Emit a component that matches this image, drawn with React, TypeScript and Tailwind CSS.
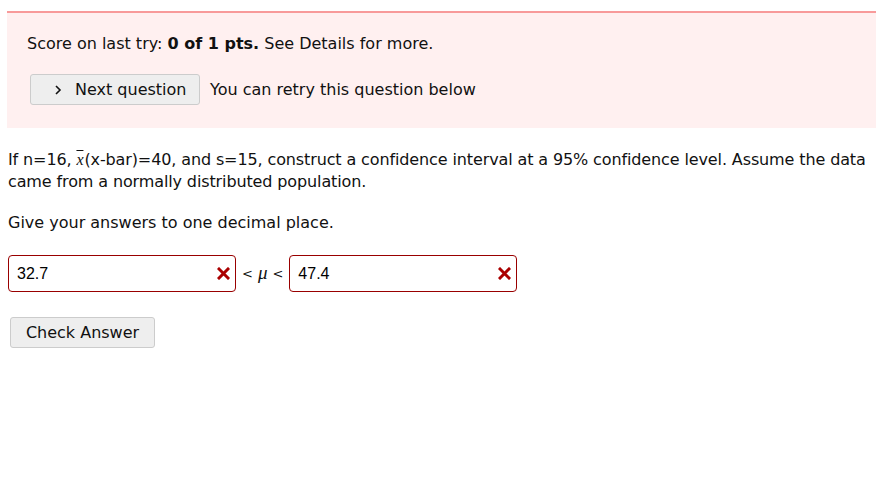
function XMark() {
  return (
    <svg width="13" height="13" viewBox="0 0 13 13" className="shrink-0">
      <path d="M2 2 L11 11 M11 2 L2 11" stroke="#aa0000" strokeWidth="3" strokeLinecap="square" />
    </svg>
  )
}

function AnswerBox({ value }: { value: string }) {
  return (
    <div className="flex items-center w-[228px] h-[37px] border border-[#990000] rounded-[4px] bg-white pl-[8px] pr-[5px]">
      <span className="flex-1 text-[16px] text-black" style={{ fontFamily: '"Liberation Sans", Arial, sans-serif' }}>
        {value}
      </span>
      <XMark />
    </div>
  )
}

export default function App() {
  return (
    <div className="w-[876px] h-[493px] bg-white text-[#111] text-[16px]" style={{ fontFamily: '"DejaVu Sans", Verdana, sans-serif' }}>
      <div className="pt-[11px] pl-[7px]">
        <div className="bg-[#fff0f0] border-t-2 border-[#f89a9a] pl-[20px] pt-[19px] pb-[23px]">
          <p className="leading-[24px]">
            Score on last try: <b>0 of 1 pts.</b> See Details for more.
          </p>
          <div className="flex items-center gap-[10px] mt-[18px]">
            <button className="flex items-center h-[31px] w-[170px] ml-[3px] pl-[22px] bg-[#eeeeee] border border-[#cccccc] rounded-[3px] text-[16px] text-[#111]">
              <svg width="10" height="12" viewBox="0 0 10 12" className="mr-[12px]">
                <path d="M3 2 L7 6 L3 10" fill="none" stroke="#111" strokeWidth="1.6" />
              </svg>
              Next question
            </button>
            <span>You can retry this question below</span>
          </div>
        </div>
      </div>

      <div className="pl-[8px] pt-[21px]">
        <p className="leading-[22px] tracking-[-0.12px]">
          If n=16,{' '}
          <span className="italic overline mr-[1px]" style={{ fontFamily: '"Liberation Serif", serif' }}>x</span>
          (x-bar)=40, and s=15, construct a confidence interval at a 95% confidence level. Assume the data came from a normally distributed population.
        </p>
        <p className="leading-[22px] mt-[19px]">Give your answers to one decimal place.</p>

        <div className="flex items-center mt-[21px]">
          <AnswerBox value="32.7" />
          <span className="mx-[6px] text-[13px] flex items-center gap-[5px]">
            &lt;<span className="italic text-[19px]" style={{ fontFamily: '"Liberation Serif", serif' }}>μ</span>&lt;
          </span>
          <AnswerBox value="47.4" />
        </div>

        <button className="mt-[25px] ml-[2px] h-[31px] w-[145px] bg-[#eeeeee] border border-[#cccccc] rounded-[3px] text-[16px] text-[#111]">
          Check Answer
        </button>
      </div>
    </div>
  )
}
